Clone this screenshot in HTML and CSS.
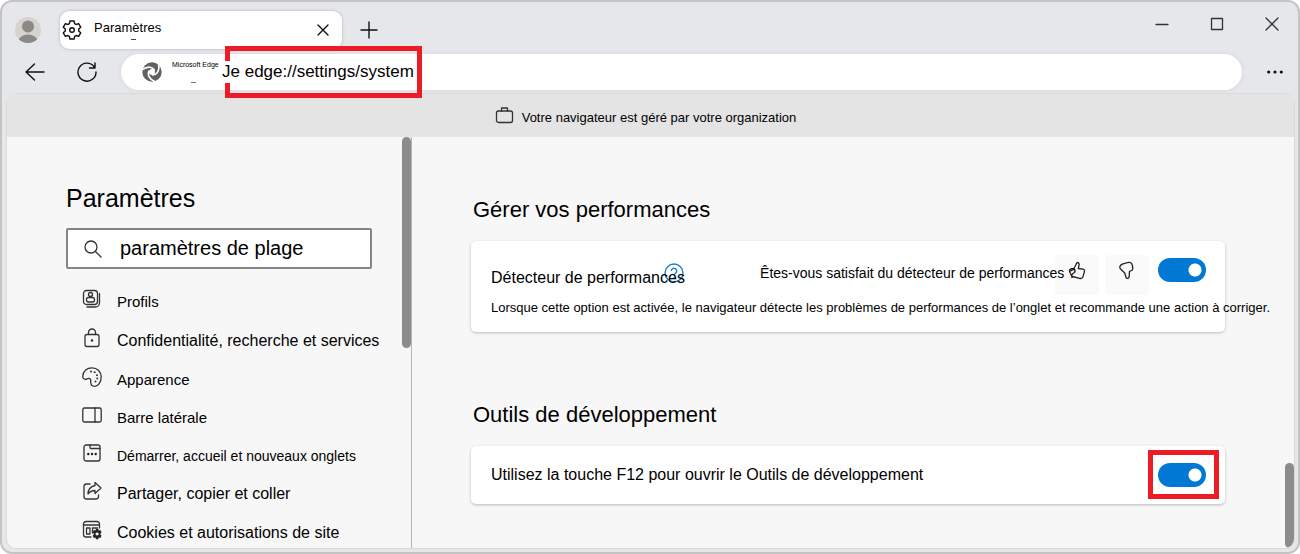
FILE: index.html
```
<!DOCTYPE html>
<html lang="fr">
<head>
<meta charset="utf-8">
<title>Paramètres</title>
<link rel="stylesheet" href="styles.css">
</head>
<body>
<div class="window">
  <header class="titlebar">
    <svg class="avatar" viewBox="0 0 26 26" aria-hidden="true"><clipPath id="disc"><circle cx="13" cy="13" r="13"/></clipPath><g clip-path="url(#disc)"><rect width="26" height="26" fill="#d5d3d0"/><circle cx="13" cy="9.500" r="6" fill="#8b8886"/><ellipse cx="13" cy="24" rx="9.500" ry="6.500" fill="#8b8886"/></g></svg>
    <div class="tab">
      <svg class="icon dark" viewBox="0 0 20 20"><path d="M7.900 1h4.200l.5 2.600 1.500.9 2.500-.9 2.100 3.600-2 1.800v2l2 1.800-2.100 3.600-2.500-.9-1.500.9-.5 2.600H7.900l-.5-2.600-1.500-.9-2.500.9-2.100-3.600 2-1.800V9l-2-1.800 2.100-3.600 2.500.9 1.500-.9z"/><circle cx="10" cy="10" r="2.300"/></svg>
      <span class="tab-title">Paramètres</span>
      <button class="plain" aria-label="Fermer l’onglet"><svg class="icon dark" viewBox="0 0 20 20"><path d="M5 5l10 10M15 5L5 15"/></svg></button>
    </div>
    <button class="plain new-tab" aria-label="Nouvel onglet"><svg class="icon dark" viewBox="0 0 20 20"><path d="M10 2v16M2 10h16"/></svg></button>
    <div class="controls">
      <button class="plain" aria-label="Réduire"><svg class="icon" viewBox="0 0 20 20"><path d="M4 10.500h12"/></svg></button>
      <button class="plain" aria-label="Agrandir"><svg class="icon" viewBox="0 0 20 20"><rect x="4.500" y="4.500" width="11" height="11"/></svg></button>
      <button class="plain" aria-label="Fermer"><svg class="icon" viewBox="0 0 20 20"><path d="M4 4l12 12M16 4L4 16"/></svg></button>
    </div>
  </header>

  <div class="toolbar">
    <button class="plain" aria-label="Retour"><svg class="icon dark" viewBox="0 0 20 20"><path d="M19 10H1M9.500 2L1 10l8.500 8"/></svg></button>
    <button class="plain reload" aria-label="Actualiser"><svg class="icon dark" viewBox="0 0 20 20"><path d="M17 4.500A9 9 0 1 0 19 10M18 1v5h-5.500"/></svg></button>
    <div class="address">
      <svg class="logo" viewBox="0 0 20 20" aria-hidden="true"><circle cx="10" cy="10" r="9.700" fill="#616161"/><circle cx="10" cy="10" r="3" fill="#fff"/><g fill="none" stroke="#fff" stroke-width="1.600"><path id="gap" d="M12.500 8.500C11 4.800 5.500 3.500 0 8"/><use href="#gap" transform="rotate(120 10 10)"/><use href="#gap" transform="rotate(240 10 10)"/></g></svg>
      <span class="site">Microsoft Edge</span>
      <span class="url-wrap"><span class="marker marker-url"></span><input class="url" aria-label="Adresse" value="Je edge://settings/system"></span>
    </div>
    <button class="plain more" aria-label="Plus"><svg class="icon" viewBox="0 0 20 20"><g fill="#111" stroke="none"><circle cx="3.700" cy="10" r="1.600"/><circle cx="10" cy="10" r="1.600"/><circle cx="16.300" cy="10" r="1.600"/></g></svg></button>
  </div>

  <div class="page">
    <div class="banner">
      <svg class="icon" viewBox="0 0 20 20"><rect x="1.500" y="4" width="16" height="11.500" rx="2"/><path d="M6.500 4V1h6v3"/></svg>
      <span>Votre navigateur est géré par votre organization</span>
    </div>
    <div class="columns">
      <aside class="sidebar">
        <h1>Paramètres</h1>
        <div class="search">
          <svg class="icon" viewBox="0 0 20 20"><circle cx="8" cy="8" r="6"/><path d="M12.500 12.500l5.500 5.500"/></svg>
          <input aria-label="Rechercher" value="paramètres de plage">
        </div>
        <nav>
          <a class="item" href="#"><svg class="icon" viewBox="0 0 20 20"><rect x="1.500" y="1.500" width="14" height="14" rx="3"/><circle cx="8.500" cy="5.500" r="2"/><rect x="4.500" y="8.500" width="8" height="4.500" rx="2"/><path d="M17.500 4.500V14a4 4 0 0 1-4 4H5"/></svg><span>Profils</span></a>
          <a class="item large" href="#"><svg class="icon" viewBox="0 0 20 20"><rect x="3" y="6.500" width="14" height="12" rx="2"/><path d="M6.500 6.500V4.500a3.500 3.500 0 0 1 7 0v2"/><circle cx="10" cy="12.500" r=".7"/></svg><span>Confidentialité, recherche et services</span></a>
          <a class="item" href="#"><svg class="icon" viewBox="0 0 20 20"><path d="M.8 9.500C1 4 5 .8 10 .8c5.500 0 9.200 4 9.200 9 0 5.500-3 9.500-6.500 9.500-2.500 0-4-1.500-4-4 0-2 .3-4-2-4-1.500 0-2 1-3.500 1C1.500 12.300.8 11 .8 9.500z"/><g fill="#333" stroke="none"><circle cx="9" cy="4.500" r="1"/><circle cx="12.700" cy="5.200" r="1"/><circle cx="15" cy="8.200" r="1"/><circle cx="15.300" cy="11.500" r="1"/><circle cx="13.500" cy="14.500" r="1"/></g></svg><span>Apparence</span></a>
          <a class="item" href="#"><svg class="icon" viewBox="0 0 20 20"><rect x=".8" y="3" width="18.400" height="14" rx="1.500"/><path d="M13 3v14"/></svg><span>Barre latérale</span></a>
          <a class="item small" href="#"><svg class="icon" viewBox="0 0 20 20"><rect x="2" y="2" width="16" height="16" rx="2"/><path d="M8 2v2.500a1 1 0 0 0 1 1h9"/><g fill="#222" stroke="none"><circle cx="6.300" cy="11" r="1.200"/><circle cx="10" cy="11" r="1.200"/><circle cx="13.700" cy="11" r="1.200"/></g></svg><span>Démarrer, accueil et nouveaux onglets</span></a>
          <a class="item big-text" href="#"><svg class="icon" viewBox="0 0 20 20"><path d="M8 3H4.500A2.500 2.500 0 0 0 2 5.500v10A2.500 2.500 0 0 0 4.500 18H14a2.500 2.500 0 0 0 2.500-2.500V14"/><path d="M13 1.500l6 5.500-6 5.500V9.500c-3 0-5 1-7 3.500 0-4.500 3-7.500 7-8.500z"/></svg><span>Partager, copier et coller</span></a>
          <a class="item large" href="#"><svg class="icon" viewBox="0 0 20 20"><path d="M17.500 8V4A2.500 2.500 0 0 0 15 1.500H4A2.500 2.500 0 0 0 1.500 4v10.500A2.500 2.500 0 0 0 4 17h5M1.500 5h16M10.500 8h5M10.500 8v5"/><rect x="4.500" y="8" width="3.500" height="6"/><path fill="#222" stroke="none" fill-rule="evenodd" d="M13.900 8.800h2.400l.4 1.700 1.600-.5 1.300 2.200-1.200 1.200v1.200l1.200 1.200-1.300 2.200-1.600-.5-.4 1.800h-2.400l-.4-1.800-1.600.5-1.300-2.200 1.200-1.200v-1.200l-1.200-1.200 1.300-2.200 1.600.5zM15.100 12.400a1.600 1.600 0 1 0 .01 0z"/></svg><span>Cookies et autorisations de site</span></a>
        </nav>
        <span class="scrollbar scrollbar-side"></span>
      </aside>
      <main>
        <section>
          <h2>Gérer vos performances</h2>
          <div class="card card-perf">
            <div class="row">
              <label class="name" for="perf"><svg class="help" viewBox="0 0 20 20" aria-hidden="true"><circle cx="10" cy="10" r="9"/><path d="M7.300 8a2.700 2.700 0 1 1 4.200 2.200c-1 .8-1.500 1.200-1.500 2.300M10 14.300v1.200"/></svg><span>Détecteur de performances</span></label>
              <span class="question">Êtes-vous satisfait du détecteur de performances ?</span>
              <div class="votes">
                <button class="vote" aria-label="Oui"><svg viewBox="0 0 20 20"><path d="M2.500 10.500l4-2 3.500-7c1.800 0 2.500 1.200 2 3L11.300 7.500l4.700.6c1.400.3 1.700 1.300 1.400 2.500l-1.400 5c-.5 1.700-1.800 2.200-3.500 1.700l-7-1.800c-1-.3-1.300-1-1.500-2z"/></svg></button>
                <button class="vote" aria-label="Non"><svg viewBox="0 0 20 20"><path d="M3.500 4.500C5 2.500 7 3 9 2c2.500-.8 5-.8 6 1l.8 4c.2 1.600-.6 2.500-2.200 3l-1.100.4-.3 5c-.2 1.900-1.600 2.500-2.900 1.600l-1.600-5L4 8.500C2.500 7.200 2.600 5.700 3.500 4.500z"/></svg></button>
              </div>
              <input class="switch" type="checkbox" role="switch" id="perf" checked>
            </div>
            <p class="note">Lorsque cette option est activée, le navigateur détecte les problèmes de performances de l’onglet et recommande une action à corriger.</p>
          </div>
        </section>
        <section>
          <h2>Outils de développement</h2>
          <div class="card card-dev">
            <label for="f12">Utilisez la touche F12 pour ouvrir le Outils de développement</label>
            <span class="marker"><input class="switch" type="checkbox" role="switch" id="f12" checked></span>
          </div>
        </section>
        <span class="scrollbar scrollbar-main"></span>
      </main>
    </div>
  </div>
</div>
</body>
</html>
```
FILE: styles.css
```
* { box-sizing: border-box; }
body { margin: 0; background: #fff; color: #000; font-family: "Liberation Sans", Arial, sans-serif; font-size: 15px; }
h1, h2, p { margin: 0; font-weight: 400; }
input { font-family: inherit; color: inherit; border: 0; padding: 0; margin: 0; outline: 0; }

.window { display: flex; flex-direction: column; height: 100vh; border: 2px solid #c4c4c4; border-radius: 12px; background: #e5e7eb; padding: 0 3px 3px 4px; overflow: hidden; }
.icon { display: block; flex: none; width: 20px; height: 20px; fill: none; stroke: #333; stroke-width: 1.3; stroke-linejoin: round; stroke-linecap: round; }
.icon.dark { stroke: #111; stroke-width: 1.4; }
.plain { display: block; flex: none; padding: 0; border: 0; background: none; }

.titlebar { display: flex; align-items: center; padding: 9px 13px 5px 9px; }
.avatar { flex: none; width: 26px; height: 26px; }
.tab { display: flex; align-items: center; width: 282px; height: 38px; margin-left: 19px; padding: 0 9px 0 2px; border-radius: 9px; background: #fff; box-shadow: 0 0 3px #aaadb3; }
.tab-title { position: relative; flex: 1; margin-left: 12px; padding-bottom: 5px; font-size: 13px; }
.tab-title::after { content: ""; position: absolute; left: 37px; bottom: 0; width: 5px; height: 1px; background: #444; }
.new-tab { margin-left: 17px; }
.controls { display: flex; gap: 35px; margin-left: auto; padding-bottom: 12px; }

.toolbar { display: flex; align-items: center; padding: 0 10px 3px 19px; }
.reload { margin-left: 32px; }
.address { display: flex; flex: 1; align-items: center; height: 36px; margin: 0 23px 0 24px; padding-left: 21px; border-radius: 18px; background: #fff; box-shadow: 0 0 4px #d4d6da; }
.logo { flex: none; width: 20px; height: 20px; }
.site { position: relative; flex: none; width: 50px; margin-left: 10px; padding-bottom: 14px; font-size: 7px; line-height: 8px; white-space: nowrap; }
.site::after { content: ""; position: absolute; left: 19px; bottom: 0; width: 5px; height: 1px; background: #777; }
.url-wrap { position: relative; display: flex; }
.url { position: relative; width: 193px; height: 22px; background: #fff; font-size: 17px; }
.marker { display: flex; border: 5px solid #ed1c24; }
.marker-url { position: absolute; inset: -15px -7px -15px 3px; }
.more { width: 20px; }

.page { display: flex; flex: 1; flex-direction: column; min-height: 0; overflow: hidden; border: 1px solid #d8dade; border-radius: 10px; background: #f7f7f7; }
.banner { display: flex; flex: none; align-items: center; justify-content: center; gap: 7px; height: 43px; padding: 3px 10px 0 0; background: #e4e4e4; font-size: 13px; }
.columns { display: flex; flex: 1; min-height: 0; }
.scrollbar { position: absolute; right: 0; width: 9px; border-radius: 5px; background: #8c8c8c; }

.sidebar { position: relative; flex: none; width: 405px; padding: 45px 39px 0 59px; border-right: 1px solid #b5b5b5; }
.scrollbar-side { top: 0; height: 211px; }
h1 { font-size: 25px; line-height: 32px; }
.search { display: flex; align-items: center; height: 41px; margin-top: 14px; padding-left: 15px; border: 2px solid #858585; border-radius: 2px; background: #fff; }
.search input { flex: 1; min-width: 0; margin-left: 17px; font-size: 20px; background: none; }
nav { padding: 11px 0 0 16px; }
.item { display: flex; align-items: center; gap: 15px; height: 38px; color: inherit; text-decoration: none; white-space: nowrap; }
.item span { padding-top: 5px; }
.item.large { height: 40px; font-size: 16px; }
.item.big-text { font-size: 16px; }
.item.small { font-size: 14px; }

main { position: relative; flex: 1; min-width: 0; padding: 57px 69px 0 59px; }
.scrollbar-main { bottom: 0; height: 85px; }
h2 { padding-left: 2px; font-size: 22px; line-height: 32px; }
section + section { margin-top: 67px; }
.card { margin-top: 15px; padding-left: 20px; border-radius: 5px; background: #fff; box-shadow: 0 1px 3px #bbb; white-space: nowrap; }
.card-perf { height: 91px; padding-top: 14px; }
.row { display: flex; align-items: flex-start; padding-right: 19px; }
.name { position: relative; padding-top: 14px; font-size: 16px; }
.name span { position: relative; }
.help { position: absolute; right: 1px; top: 8px; width: 20px; height: 20px; fill: none; stroke: #1b7fd6; stroke-width: 1.4; }
.question { position: relative; z-index: 1; margin: 10px -21px 0 auto; font-size: 14px; }
.votes { display: flex; gap: 6px; margin-right: 9px; }
.vote { width: 44px; height: 40px; padding: 0 0 8px; border: 0; border-radius: 4px; background: #fafafa; }
.vote svg { display: block; width: 20px; height: 20px; margin: 0 auto; fill: none; stroke: #222; stroke-width: 1.3; stroke-linejoin: round; }
.switch { appearance: none; flex: none; width: 48px; height: 24px; border-radius: 12px; background: radial-gradient(circle at 37px 12px, #fff 6px, #0078d4 7px); }
.row .switch { margin-top: 3px; }
.note { padding-top: 5px; font-size: 13px; }
.card-dev { display: flex; align-items: center; justify-content: space-between; height: 58px; padding-right: 6px; font-size: 16px; }
.card-dev .marker { margin-bottom: 2px; padding: 8px 8px 7px 5px; }
```
